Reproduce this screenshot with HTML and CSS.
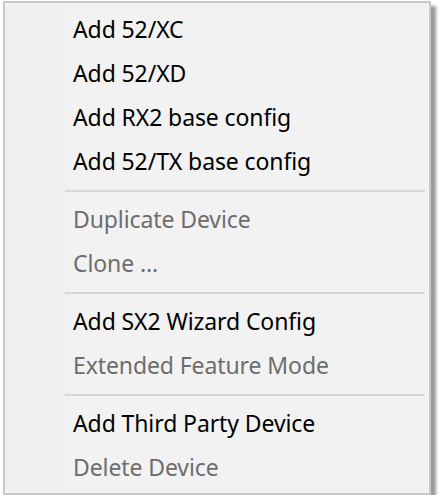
FILE: index.html
```html
<!DOCTYPE html>
<html lang="en">
<head>
<meta charset="UTF-8">
<meta name="viewport" content="width=device-width, initial-scale=1.0">
<title>Device Menu</title>
<link rel="stylesheet" href="styles.css">
</head>
<body>

<div class="menu">
    <div class="item">Add 52/XC</div>
    <div class="item">Add 52/XD</div>
    <div class="item">Add RX2 base config</div>
    <div class="item">Add 52/TX base config</div>
    <div class="separator"></div>
    <div class="item disabled">Duplicate Device</div>
    <div class="item disabled">Clone ...</div>
    <div class="separator"></div>
    <div class="item">Add SX2 Wizard Config</div>
    <div class="item disabled">Extended Feature Mode</div>
    <div class="separator"></div>
    <div class="item">Add Third Party Device</div>
    <div class="item disabled">Delete Device</div>
</div>

</body>
</html>
```

FILE: styles.css
```css
body {
    margin: 0;
    padding: 0;
    background-color: #fff;
    font-family: "Noto Sans", "Open Sans", sans-serif;
}
.menu {
    box-sizing: border-box;
    width: 428px;
    height: 494px;
    margin: 1px 0 0 3px;
    padding: 4px 0 4px 0;
    border: 2px solid #c9c9c9;
    background: linear-gradient(to right, #f0f0f0 60px, #f2f2f2 60px);
    box-shadow: 5px 5px 3px rgba(0, 0, 0, 0.4);
}
.item {
    height: 44px;
    line-height: 45px;
    padding-left: 68px;
    font-size: 23px;
    letter-spacing: -0.1px;
    color: #000;
    white-space: nowrap;
}
.item.disabled {
    color: #6d6d6d;
}
.separator {
    height: 2px;
    margin: 7px 4px 5px 60px;
    background-color: #d7d7d7;
}
```
